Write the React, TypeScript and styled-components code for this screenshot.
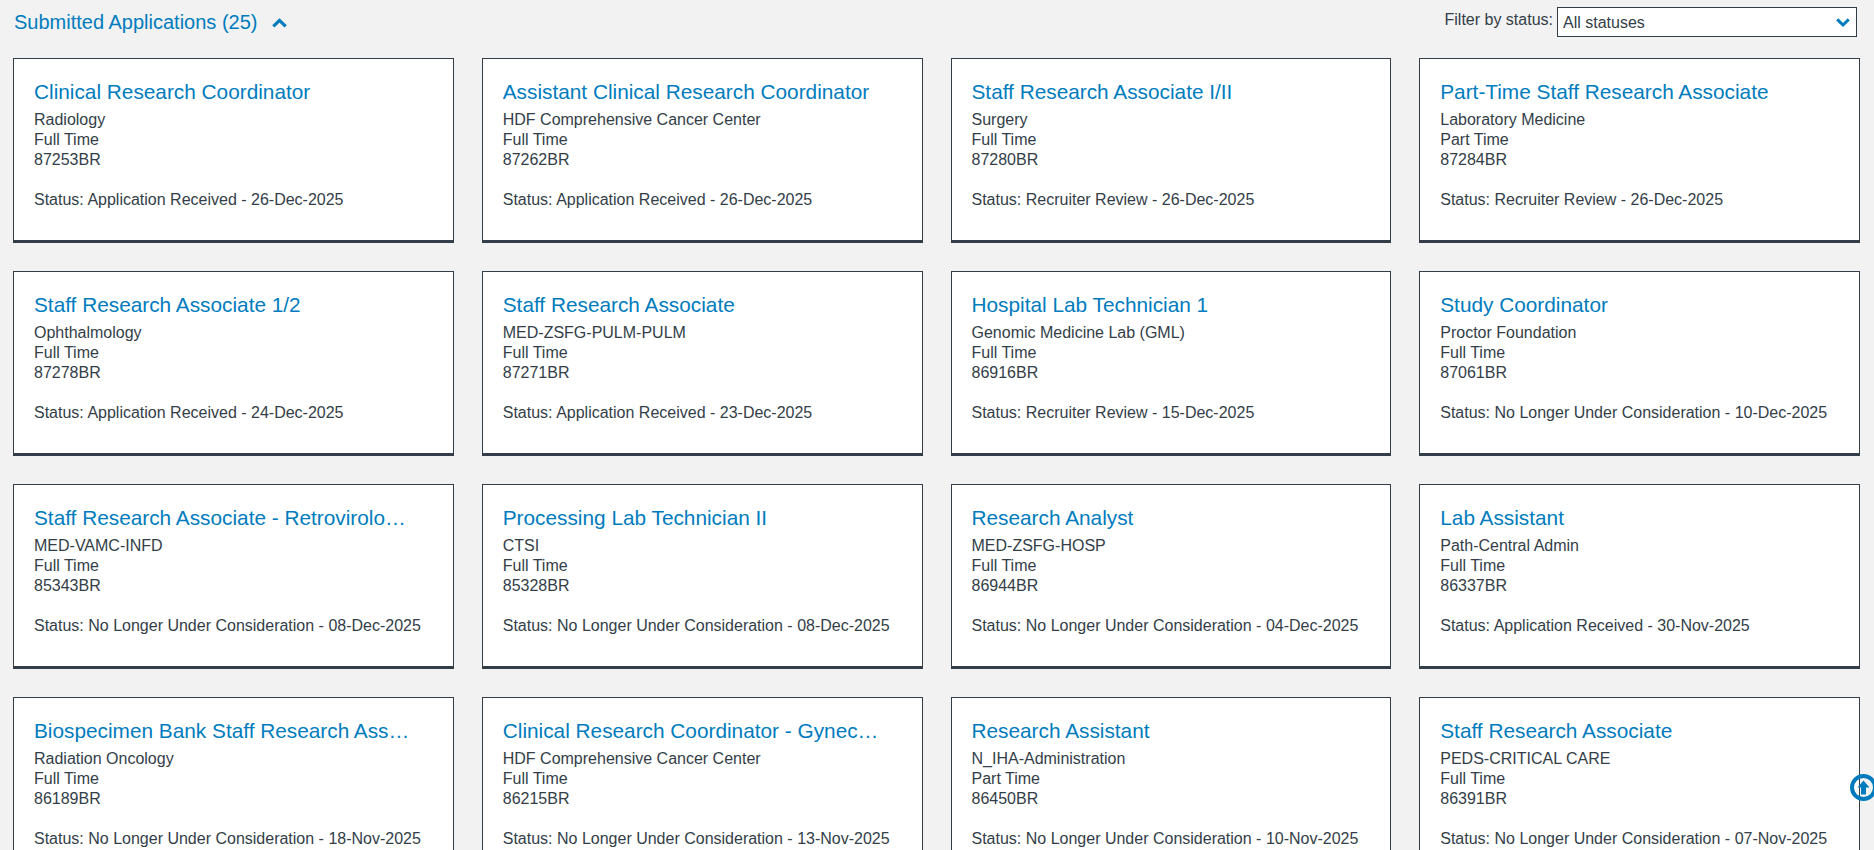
import React from "react";
import styled, { createGlobalStyle } from "styled-components";

const Global = createGlobalStyle`
  html, body { margin: 0; padding: 0; height: 850px; overflow: hidden; background: #f2f2f2; }
  body { font-family: "Liberation Sans", Arial, sans-serif; color: #333e48; }
`;

const Page = styled.div`
  padding: 0 14px 0 13px;
`;

const Header = styled.header`
  display: flex;
  align-items: flex-start;
  justify-content: space-between;
  height: 58px;
`;

const Heading = styled.h2`
  margin: 11px 0 0 1px;
  display: flex;
  align-items: center;
  gap: 15px;
  font-size: 20px;
  line-height: 23px;
  font-weight: 400;
  color: #007cbe;
`;

const Filter = styled.div`
  display: flex;
  align-items: flex-start;
  gap: 4px;
  margin: 7px 3px 0 0;
  font-size: 16px;
`;

const FilterLabel = styled.label`
  line-height: 26px;
`;

const SelectBox = styled.div`
  box-sizing: border-box;
  width: 300px;
  height: 30px;
  display: flex;
  align-items: center;
  justify-content: space-between;
  padding: 1px 6px 0 5px;
  background: #fff;
  border: 1px solid #333e48;
`;

const Grid = styled.main`
  display: grid;
  grid-template-columns: repeat(4, 1fr);
  column-gap: 28px;
  row-gap: 28px;
`;

const Card = styled.article`
  box-sizing: border-box;
  height: 185px;
  padding: 19px 20px 0;
  background: #fff;
  border: 1px solid #333e48;
  border-bottom-width: 3px;
  min-width: 0;
`;

const Title = styled.h3`
  margin: 0 0 4px;
  width: 378px;
  font-size: 20.8px;
  line-height: 28px;
  font-weight: 400;
  color: #007cbe;
  white-space: nowrap;
  overflow: hidden;
  text-overflow: ellipsis;
`;

const Line = styled.div`
  font-size: 16px;
  line-height: 20px;
`;

const StatusLine = styled(Line)`
  margin-top: 20px;
`;

const ScrollTop = styled.button`
  position: fixed;
  right: -3px;
  top: 774px;
  width: 27px;
  height: 27px;
  padding: 0;
  border: 0;
  background: none;
  display: block;
`;

type Job = [string, string, string, string, string];

const jobs: Job[] = [
  ["Clinical Research Coordinator", "Radiology", "Full Time", "87253BR", "Application Received - 26-Dec-2025"],
  ["Assistant Clinical Research Coordinator", "HDF Comprehensive Cancer Center", "Full Time", "87262BR", "Application Received - 26-Dec-2025"],
  ["Staff Research Associate I/II", "Surgery", "Full Time", "87280BR", "Recruiter Review - 26-Dec-2025"],
  ["Part-Time Staff Research Associate", "Laboratory Medicine", "Part Time", "87284BR", "Recruiter Review - 26-Dec-2025"],
  ["Staff Research Associate 1/2", "Ophthalmology", "Full Time", "87278BR", "Application Received - 24-Dec-2025"],
  ["Staff Research Associate", "MED-ZSFG-PULM-PULM", "Full Time", "87271BR", "Application Received - 23-Dec-2025"],
  ["Hospital Lab Technician 1", "Genomic Medicine Lab (GML)", "Full Time", "86916BR", "Recruiter Review - 15-Dec-2025"],
  ["Study Coordinator", "Proctor Foundation", "Full Time", "87061BR", "No Longer Under Consideration - 10-Dec-2025"],
  ["Staff Research Associate - Retrovirology Lab", "MED-VAMC-INFD", "Full Time", "85343BR", "No Longer Under Consideration - 08-Dec-2025"],
  ["Processing Lab Technician II", "CTSI", "Full Time", "85328BR", "No Longer Under Consideration - 08-Dec-2025"],
  ["Research Analyst", "MED-ZSFG-HOSP", "Full Time", "86944BR", "No Longer Under Consideration - 04-Dec-2025"],
  ["Lab Assistant", "Path-Central Admin", "Full Time", "86337BR", "Application Received - 30-Nov-2025"],
  ["Biospecimen Bank Staff Research Associate", "Radiation Oncology", "Full Time", "86189BR", "No Longer Under Consideration - 18-Nov-2025"],
  ["Clinical Research Coordinator - Gynecologic Oncology", "HDF Comprehensive Cancer Center", "Full Time", "86215BR", "No Longer Under Consideration - 13-Nov-2025"],
  ["Research Assistant", "N_IHA-Administration", "Part Time", "86450BR", "No Longer Under Consideration - 10-Nov-2025"],
  ["Staff Research Associate", "PEDS-CRITICAL CARE", "Full Time", "86391BR", "No Longer Under Consideration - 07-Nov-2025"],
];

const Chevron = ({ up, w, h }: { up?: boolean; w: number; h: number }) => (
  <svg width={w} height={h} viewBox="0 0 16 10" aria-hidden="true">
    <path
      d={up ? "M1.4 8.6 8 2.2l6.6 6.4" : "M1.4 1.4 8 7.8l6.6-6.4"}
      fill="none"
      stroke="#007cbe"
      strokeWidth="3.4"
    />
  </svg>
);

export default function App() {
  return (
    <Page>
      <Global />
      <Header>
        <Heading>
          Submitted Applications (25)
          <Chevron up w={15} h={10} />
        </Heading>
        <Filter>
          <FilterLabel>Filter by status:</FilterLabel>
          <SelectBox>
            All statuses
            <Chevron w={14} h={9} />
          </SelectBox>
        </Filter>
      </Header>
      <Grid>
        {jobs.map(([title, dept, type, id, status]) => (
          <Card key={id}>
            <Title>{title}</Title>
            <Line>{dept}</Line>
            <Line>{type}</Line>
            <Line>{id}</Line>
            <StatusLine>Status: {status}</StatusLine>
          </Card>
        ))}
      </Grid>
      <ScrollTop aria-label="Back to top">
        <svg width="27" height="27" viewBox="0 0 27 27">
          <circle cx="13.5" cy="13.5" r="11.5" fill="none" stroke="#007cbe" strokeWidth="4" />
          <path d="M13.5 6.5 19.5 13.5H16V20.5H11V13.5H7.5Z" fill="#007cbe" />
        </svg>
      </ScrollTop>
    </Page>
  );
}
